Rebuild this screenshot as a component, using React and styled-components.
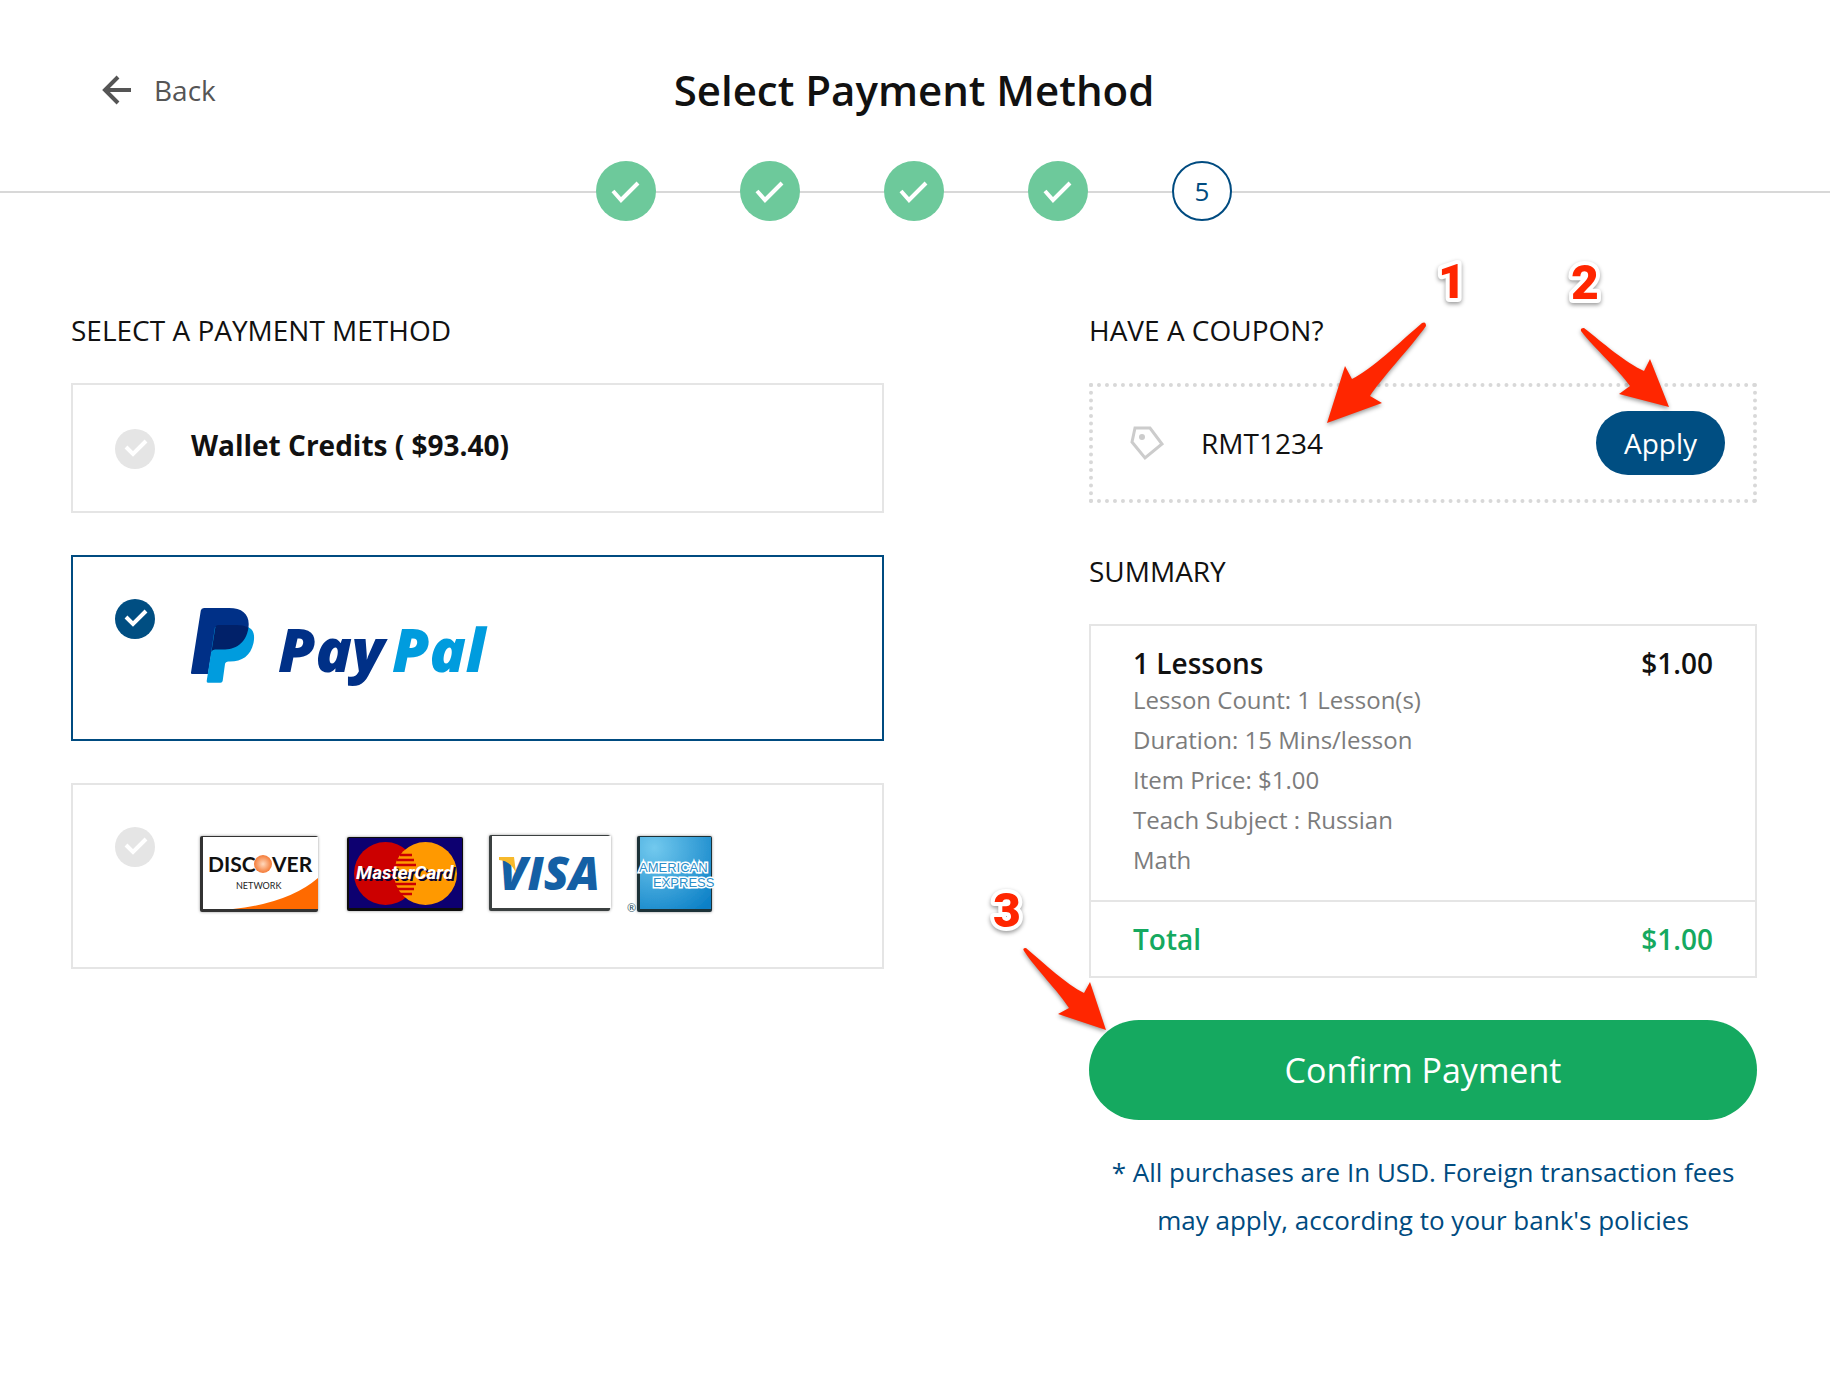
import React, { useState } from "react";
import styled, { createGlobalStyle } from "styled-components";

const STEPS = [1, 2, 3, 4, 5];
const CURRENT_STEP = 5;

const LESSON_DETAILS = [
    "Lesson Count: 1 Lesson(s)",
    "Duration: 15 Mins/lesson",
    "Item Price: $1.00",
    "Teach Subject : Russian",
    "Math",
];

const PayPalLogo = () => (
    <svg width="300" height="98" viewBox="0 0 300 98" role="img" aria-label="PayPal">
        <path fill="#003087" d="M1 75Q-.2 75 0 73.500L9.800 11.500Q10.300 9 13 9H38C52 9 59 16 57.500 28C55 45 44 50.500 32 50.500H24Q21 50.500 20.500 53.500L17 75Z" />
        <path fill="#009cde" d="M57.500 28.300C63 31 64 37 62.500 44C59.500 57 51 62.500 39 62.500H37.500Q34.500 62.500 34 65L31.700 81.700Q31.400 83.700 29.500 83.700H17Q15.400 83.700 15.700 82L24 28Z" />
        <path fill="#012169" d="M27 26H45C50 26 54 26.800 57.500 28.500C55 45 44 50.500 32 50.500H24Q21 50.500 20.400 53L24.300 28.500Q24.700 26 27 26Z" />
        <LogoText x="87" y="73" fontSize="60" fill="#003087">Pay</LogoText>
        <LogoText x="201" y="73" fontSize="60" fill="#009cde">Pal</LogoText>
    </svg>
);

const CardBrands = () => (
    <svg width="526" height="98" viewBox="0 0 526 98" role="img" aria-label="Discover, MasterCard, Visa, American Express">
        <defs>
            <radialGradient id="discoverBall">
                <stop offset="0" stopColor="#ffd9bd" />
                <stop offset="1" stopColor="#f47a36" />
            </radialGradient>
            <radialGradient id="amexBlue" cx="0.2" cy="0.15" r="1.100">
                <stop offset="0" stopColor="#72c9ee" />
                <stop offset="1" stopColor="#0a7fc6" />
            </radialGradient>
            <filter id="cardShadow" x="-10%" y="-10%" width="120%" height="120%">
                <feDropShadow dx="0" dy="0" stdDeviation="1.500" floodOpacity="0.4" />
            </filter>
        </defs>

        <g filter="url(#cardShadow)">
            <rect x="9" y="9" width="118" height="76" rx="2" fill="#333" />
            <rect x="12" y="10" width="115" height="72" fill="#fff" />
        </g>
        <path fill="#ff6a00" d="M42 82Q98 76 127 51V82Z" />
        <CardText x="17" y="45" fontSize="21" fill="#111">DISC</CardText>
        <circle cx="72" cy="37" r="9" fill="url(#discoverBall)" />
        <CardText x="81" y="45" fontSize="21" fill="#111">VER</CardText>
        <SmallCardText x="45" y="62" fontSize="9" fill="#222">NETWORK</SmallCardText>

        <g filter="url(#cardShadow)">
            <rect x="156" y="10" width="116" height="74" rx="2" fill="#111" />
            <rect x="158" y="11" width="113" height="70" fill="#0a0270" />
        </g>
        <circle cx="194.500" cy="46.500" r="31.500" fill="#cc0000" />
        <circle cx="234.500" cy="46.500" r="31.500" fill="#ff9900" />
        <path stroke="#cc0000" strokeWidth="2.500" d="M209 28H221M206 33H223M204 38H225M204 57H225M206 62H223M209 67H221" />
        <MasterText x="167" y="54" fontSize="19" fill="#0a0230">MasterCard</MasterText>
        <MasterText x="165" y="52" fontSize="19" fill="#fff">MasterCard</MasterText>

        <g filter="url(#cardShadow)">
            <rect x="298" y="8" width="121" height="76" rx="2" fill="#3b3f40" />
            <rect x="301" y="9" width="119" height="72" fill="#fff" />
        </g>
        <LogoText x="308" y="63" fontSize="46" fill="#1460a5">VISA</LogoText>
        <path fill="#f7b92b" d="M308 30H323L325 46Q320 34 308 33Z" />

        <g filter="url(#cardShadow)">
            <rect x="446" y="9" width="75" height="76" rx="2" fill="#1d3038" />
            <rect x="449" y="10" width="71" height="72" fill="url(#amexBlue)" />
        </g>
        <AmexText x="448" y="45" fontSize="13" fill="#2c8fc9">AMERICAN</AmexText>
        <AmexText x="462" y="60" fontSize="13" fill="#2c8fc9">EXPRESS</AmexText>
        <SmallCardText x="436" y="85" fontSize="11" fill="#234c60">®</SmallCardText>
    </svg>
);

const OPTIONS = [
    { id: "wallet", label: "Wallet Credits ( $93.40)" },
    { id: "paypal", logo: <PayPalLogo /> },
    { id: "card", logo: <CardBrands /> },
];

const PaymentOption = ({ option, selected, onSelect }) => (
    <OptionCard $selected={selected} $align={option.label ? "flex-end" : "flex-start"}>
        <RadioWrap>
            <Radio
                type="radio"
                name="payment"
                value={option.id}
                checked={selected}
                onChange={() => onSelect(option.id)}
            />
            <RadioTick viewBox="0 0 40 40">
                <path d="M11 18L18 25L31 12" />
            </RadioTick>
        </RadioWrap>
        {option.label ? <OptionLabel>{option.label}</OptionLabel> : option.logo}
    </OptionCard>
);

const App = () => {
    const [method, setMethod] = useState("paypal");
    const [coupon, setCoupon] = useState("RMT1234");

    return (
        <Page>
            <GlobalStyle />
            <Header>
                <BackLink href="#back">
                    <svg width="30" height="30" viewBox="0 0 30 30" fill="none" stroke="#555" strokeWidth="4">
                        <path d="M29 15H4M16 2L3 15L16 28" />
                    </svg>
                    Back
                </BackLink>
                <PageTitle>Select Payment Method</PageTitle>
            </Header>
            <Steps>
                {STEPS.map((step) => (
                    <Step key={step} $done={step < CURRENT_STEP}>
                        {step < CURRENT_STEP ? (
                            <svg width="60" height="60" viewBox="0 0 60 60" fill="none" stroke="#fff" strokeWidth="4">
                                <path d="M17 30L25 39L42 22" />
                            </svg>
                        ) : step}
                    </Step>
                ))}
            </Steps>

            <Content>
                <section>
                    <SectionTitle>SELECT A PAYMENT METHOD</SectionTitle>
                    <OptionList>
                        {OPTIONS.map((option) => (
                            <PaymentOption
                                key={option.id}
                                option={option}
                                selected={method === option.id}
                                onSelect={setMethod}
                            />
                        ))}
                    </OptionList>
                </section>

                <Sidebar>
                    <SectionTitle as="label" htmlFor="coupon">HAVE A COUPON?</SectionTitle>
                    <CouponBox>
                        <TagIcon viewBox="0 0 36 36">
                            <path d="M6 3H21L33 19L16 33L3 17Z" />
                            <circle cx="13" cy="12" r="3" />
                        </TagIcon>
                        <CouponInput
                            type="text"
                            id="coupon"
                            value={coupon}
                            onChange={(e) => setCoupon(e.target.value)}
                        />
                        <ApplyButton type="button">Apply</ApplyButton>
                    </CouponBox>

                    <SectionTitle>SUMMARY</SectionTitle>
                    <SummaryBox>
                        <SummaryPart>
                            <SummaryRow>
                                <span>1 Lessons</span>
                                <span>$1.00</span>
                            </SummaryRow>
                            <DetailList>
                                {LESSON_DETAILS.map((detail) => <li key={detail}>{detail}</li>)}
                            </DetailList>
                        </SummaryPart>
                        <TotalPart>
                            <SummaryRow>
                                <span>Total</span>
                                <span>$1.00</span>
                            </SummaryRow>
                        </TotalPart>
                    </SummaryBox>
                    <ConfirmButton type="button">Confirm Payment</ConfirmButton>
                    <Note>* All purchases are In USD. Foreign transaction fees may apply, according to your bank's policies</Note>

                    <CodeMarker width="170" height="175" viewBox="0 0 170 175">
                        <path d="M7 168L25 111L32 124C52 114 80 87 102 68Q106 66 106 71C92 91 60 125 50 141L62 148Z" />
                        <text x="118" y="43">1</text>
                    </CodeMarker>
                    <ApplyMarker width="110" height="160" viewBox="0 0 110 160">
                        <path d="M104 152L85 104L79 116C61 108 38 88 19 73Q15 73 16 76C30 94 54 115 65 131L54 139Z" />
                        <text x="6" y="44">2</text>
                    </ApplyMarker>
                    <ConfirmMarker width="130" height="160" viewBox="0 0 130 160">
                        <path d="M121 150L105 102L99 113C81 104 60 84 41 68Q37 68 39 71C50 88 74 112 84 128L73 134Z" />
                        <text x="8" y="47">3</text>
                    </ConfirmMarker>
                </Sidebar>
            </Content>
        </Page>
    );
};

export default App;

const GlobalStyle = createGlobalStyle`
  * {
    box-sizing: border-box;
  }
  body {
    margin: 0;
    background-color: #fff;
    color: #111;
    font-family: "Open Sans", "Noto Sans", sans-serif;
    font-size: 28px;
  }
`;

const Page = styled.main`
  padding: 60px 0;
`;

const Header = styled.header`
  display: grid;
  grid-template-columns: 1fr auto 1fr;
  align-items: center;
  padding: 0 104px 0 102px;
`;

const BackLink = styled.a`
  display: flex;
  align-items: center;
  gap: 22px;
  color: #555;
  text-decoration: none;
`;

const PageTitle = styled.h1`
  margin: 0;
  font-size: 42px;
  line-height: 60px;
  font-weight: 600;
`;

const Steps = styled.div`
  display: flex;
  justify-content: center;
  gap: 84px;
  margin-top: 41px;
  padding-right: 2px;
  background: linear-gradient(#d8d8d8, #d8d8d8) 0 30px / 100% 2px no-repeat;
`;

const Step = styled.div`
  display: flex;
  align-items: center;
  justify-content: center;
  width: 60px;
  height: 60px;
  border-radius: 50%;
  border: ${({ $done }) => ($done ? "none" : "2px solid #004b80")};
  background-color: ${({ $done }) => ($done ? "#6dc99b" : "#fff")};
  color: #004b80;
  font-size: 26px;
`;

const Content = styled.div`
  display: grid;
  grid-template-columns: 813fr 668fr;
  column-gap: 205px;
  align-items: start;
  margin-top: 88px;
  padding: 0 73px 0 71px;
`;

const SectionTitle = styled.h2`
  display: block;
  margin: 0 0 32px;
  font-size: 28px;
  line-height: 42px;
  font-weight: 400;
`;

const OptionList = styled.div`
  display: flex;
  flex-direction: column;
  gap: 42px;
`;

const OptionCard = styled.label`
  display: flex;
  align-items: ${({ $align }) => $align};
  gap: 36px;
  padding: 42px;
  border: 2px solid ${({ $selected }) => ($selected ? "#004b80" : "#e5e5e5")};
  cursor: pointer;
`;

const OptionLabel = styled.span`
  padding-bottom: 6px;
  line-height: 36px;
  font-weight: 700;
`;

const RadioWrap = styled.span`
  position: relative;
  flex: none;
  width: 40px;
  height: 40px;
`;

const Radio = styled.input`
  appearance: none;
  width: 40px;
  height: 40px;
  margin: 0;
  display: block;
  border-radius: 50%;
  background-color: #e5e5e5;
  cursor: pointer;
  &:checked {
    background-color: #004e82;
  }
`;

const RadioTick = styled.svg`
  position: absolute;
  inset: 0;
  fill: none;
  stroke: #fff;
  stroke-width: 4px;
  pointer-events: none;
`;

const LogoText = styled.text`
  font-family: "Open Sans", sans-serif;
  font-weight: 800;
  font-style: italic;
`;

const CardText = styled.text`
  font-family: Lato, sans-serif;
  font-weight: 700;
`;

const SmallCardText = styled.text`
  font-family: Lato, sans-serif;
`;

const MasterText = styled.text`
  font-family: Roboto, sans-serif;
  font-weight: 700;
  font-style: italic;
`;

const AmexText = styled.text`
  font-family: "Liberation Sans", sans-serif;
  stroke: #fff;
  stroke-width: 3px;
  paint-order: stroke;
`;

const Sidebar = styled.aside`
  position: relative;
`;

const CouponBox = styled.div`
  display: flex;
  align-items: center;
  gap: 36px;
  margin-bottom: 47px;
  padding: 24px 28px 24px 36px;
  border: 4px dotted #d8d8d8;
`;

const TagIcon = styled.svg`
  flex: none;
  width: 36px;
  height: 36px;
  fill: none;
  stroke: #ccc;
  stroke-width: 3px;
  circle {
    fill: #ccc;
    stroke: none;
  }
`;

const CouponInput = styled.input`
  flex: 1;
  min-width: 0;
  padding: 0;
  border: none;
  outline: none;
  background: none;
  color: #111;
  font-family: inherit;
  font-size: 28px;
`;

const ApplyButton = styled.button`
  height: 64px;
  padding: 0 28px;
  border: none;
  border-radius: 32px;
  background-color: #004e82;
  color: #fff;
  font-family: inherit;
  font-size: 28px;
  cursor: pointer;
`;

const SummaryBox = styled.div`
  border: 2px solid #e5e5e5;
`;

const SummaryPart = styled.div`
  padding: 20px 42px;
`;

const TotalPart = styled(SummaryPart)`
  border-top: 2px solid #e5e5e5;
  color: #15a960;
`;

const SummaryRow = styled.div`
  display: flex;
  justify-content: space-between;
  line-height: 34px;
  font-weight: 600;
`;

const DetailList = styled.ul`
  margin: 0;
  padding: 0;
  list-style: none;
  color: #7c7c7c;
  font-size: 24px;
  line-height: 40px;
`;

const ConfirmButton = styled.button`
  display: block;
  width: 100%;
  height: 100px;
  margin-top: 42px;
  border: none;
  border-radius: 50px;
  background-color: #15a960;
  color: #fff;
  font-family: inherit;
  font-size: 34px;
  cursor: pointer;
`;

const Note = styled.p`
  margin: 28px 0 0;
  padding: 0 20px;
  color: #004b80;
  font-size: 26px;
  line-height: 48px;
  text-align: center;
`;

const Marker = styled.svg`
  position: absolute;
  pointer-events: none;
  overflow: visible;
  fill: #ff2600;
  filter: drop-shadow(0 2px 2px rgba(0, 0, 0, 0.4));
  text {
    font-family: Roboto, sans-serif;
    font-size: 48px;
    font-weight: 900;
    stroke: #fff;
    stroke-width: 8px;
    stroke-linejoin: round;
    paint-order: stroke;
  }
`;

const CodeMarker = styled(Marker)`
  top: -54px;
  left: 231px;
`;

const ApplyMarker = styled(Marker)`
  top: -54px;
  right: 82px;
`;

const ConfirmMarker = styled(Marker)`
  top: 571px;
  left: -104px;
`;
